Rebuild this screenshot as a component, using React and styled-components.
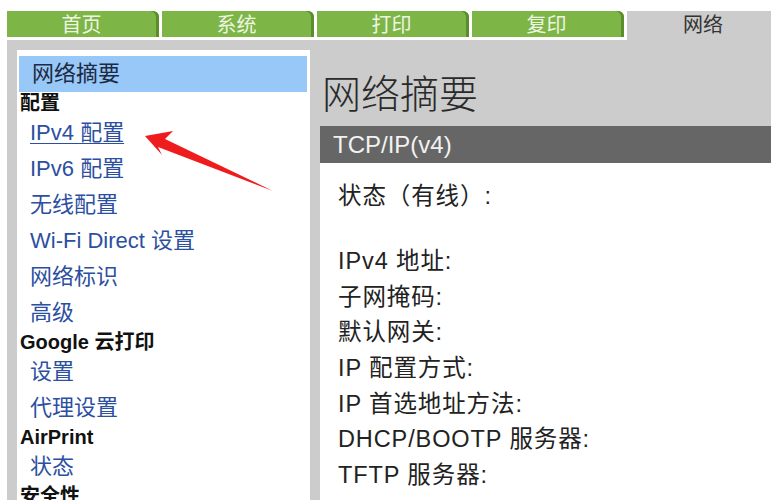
import React from "react";
import styled, { createGlobalStyle } from "styled-components";

const GlobalStyle = createGlobalStyle`
  html, body {
    margin: 0;
    padding: 0;
    background: #fff;
    overflow: hidden;
  }
`;

const latin = `"Liberation Sans", Arial, "Noto Sans CJK SC", sans-serif`;

const Page = styled.div`
  position: relative;
  width: 771px;
  height: 500px;
  overflow: hidden;
  display: flex;
  flex-direction: column;
  padding: 11px 0 0 7px;
  box-sizing: border-box;
  font-family: ${latin};
`;

const TabBar = styled.div`
  display: flex;
  align-items: flex-start;
  gap: 3px;
`;

const Tab = styled.div`
  flex: 0 0 152px;
  height: 26px;
  margin-bottom: 3px;
  box-sizing: border-box;
  background: #7db547;
  border-top-right-radius: 6px;
  box-shadow: inset -3px 0 0 #5b8d2c;
  color: #eef6e2;
  font-size: 20px;
  line-height: 29px;
  text-align: center;
  padding-right: 3px;
`;

const ActiveTab = styled.div`
  flex: 1;
  height: 29px;
  background: #cccccc;
  color: #333;
  font-size: 20px;
  line-height: 28px;
  text-align: center;
  padding-left: 8px;
`;

const Body = styled.div`
  flex: 1;
  display: flex;
  gap: 10px;
  background: #cccccc;
  padding: 10px 0 0 10px;
  min-height: 0;
`;

const Nav = styled.div`
  width: 293px;
  flex: 0 0 293px;
  background: #fff;
  padding: 6px 3px 0 2px;
  box-sizing: border-box;
`;

const NavCurrent = styled.div`
  height: 36px;
  background: #97c8f8;
  color: #1d2a44;
  font-size: 22px;
  line-height: 36px;
  padding-left: 13px;
`;

const NavHeader = styled.div`
  height: 23px;
  line-height: 23px;
  padding-left: 1px;
  font-size: 20px;
  font-weight: bold;
  color: #111;
`;

const NavLink = styled.div`
  height: 36px;
  line-height: 36px;
  padding-left: 11px;
  font-size: 22px;
  color: #2c4f9f;
  text-decoration: ${(p) => (p.$active ? "underline" : "none")};
  text-underline-offset: 3px;
  text-decoration-thickness: 1px;
`;

const Main = styled.div`
  flex: 1;
  display: flex;
  flex-direction: column;
  min-width: 0;
`;

const Title = styled.h1`
  margin: 0;
  height: 76px;
  display: flex;
  align-items: center;
  padding: 6px 0 0 2px;
  box-sizing: border-box;
  font-size: 39px;
  font-weight: 300;
  color: #2a2a2a;
`;

const SectionBar = styled.div`
  height: 37px;
  background: #666666;
  color: #f2f2f2;
  font-size: 24px;
  line-height: 37px;
  padding-left: 13px;
`;

const Panel = styled.div`
  flex: 1;
  background: #fff;
  padding: 16px 18px 0;
`;

const Field = styled.div`
  height: 35.7px;
  line-height: 35.7px;
  font-size: 23.5px;
  letter-spacing: 0.9px;
  color: #222;
  white-space: nowrap;
  margin-bottom: ${(p) => (p.$gap ? "29.3px" : "0")};
`;

const ArrowLayer = styled.svg`
  position: absolute;
  left: 0;
  top: 0;
  pointer-events: none;
`;

const tabs = ["首页", "系统", "打印", "复印"];

const navItems = [
  { type: "header", label: "配置" },
  { type: "link", label: "IPv4 配置", active: true },
  { type: "link", label: "IPv6 配置" },
  { type: "link", label: "无线配置" },
  { type: "link", label: "Wi-Fi Direct 设置" },
  { type: "link", label: "网络标识" },
  { type: "link", label: "高级" },
  { type: "header", label: "Google 云打印" },
  { type: "link", label: "设置" },
  { type: "link", label: "代理设置" },
  { type: "header", label: "AirPrint" },
  { type: "link", label: "状态" },
  { type: "header", label: "安全性" },
];

const fields = [
  "IPv4 地址:",
  "子网掩码:",
  "默认网关:",
  "IP 配置方式:",
  "IP 首选地址方法:",
  "DHCP/BOOTP 服务器:",
  "TFTP 服务器:",
];

export default function App() {
  return (
    <>
      <GlobalStyle />
      <Page>
        <TabBar>
          {tabs.map((t) => (
            <Tab key={t}>{t}</Tab>
          ))}
          <ActiveTab>网络</ActiveTab>
        </TabBar>
        <Body>
          <Nav>
            <NavCurrent>网络摘要</NavCurrent>
            {navItems.map((item) =>
              item.type === "header" ? (
                <NavHeader key={item.label}>{item.label}</NavHeader>
              ) : (
                <NavLink key={item.label} $active={item.active}>
                  {item.label}
                </NavLink>
              )
            )}
          </Nav>
          <Main>
            <Title>网络摘要</Title>
            <SectionBar>TCP/IP(v4)</SectionBar>
            <Panel>
              <Field $gap>状态（有线）:</Field>
              {fields.map((f) => (
                <Field key={f}>{f}</Field>
              ))}
            </Panel>
          </Main>
        </Body>
        <ArrowLayer width="771" height="500" viewBox="0 0 771 500">
          <polygon
            points="145,136 173,131 165,139 273,191 158,147 162,155"
            fill="#ee1c1c"
          />
        </ArrowLayer>
      </Page>
    </>
  );
}
